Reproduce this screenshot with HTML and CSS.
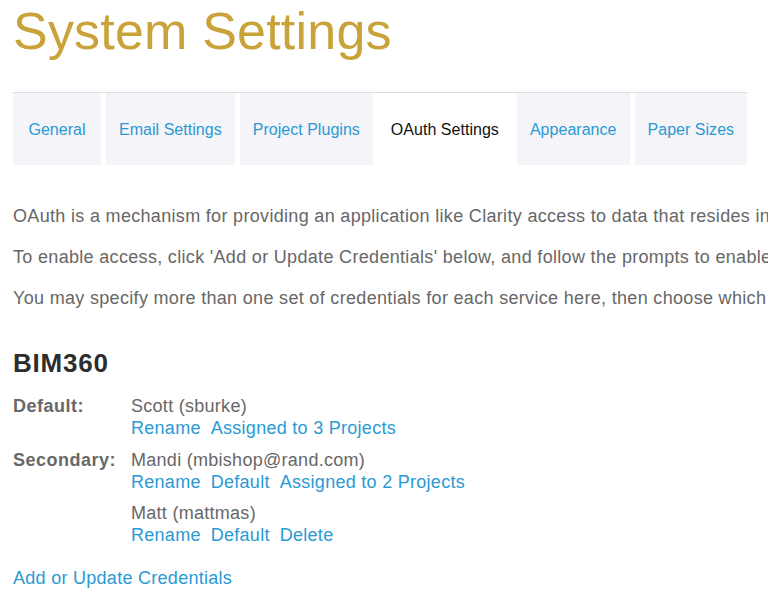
FILE: index.html
```html
<!DOCTYPE html>
<html lang="en">
<head>
<meta charset="utf-8">
<title>System Settings</title>
<link rel="stylesheet" href="styles.css">
</head>
<body>
<div class="page">
  <h1 class="page-title">System Settings</h1>
  <ul class="tabs">
    <li class="tab tab-general"><a href="#">General</a></li>
    <li class="tab"><a href="#">Email Settings</a></li>
    <li class="tab"><a href="#">Project Plugins</a></li>
    <li class="tab active"><a href="#">OAuth Settings</a></li>
    <li class="tab"><a href="#">Appearance</a></li>
    <li class="tab"><a href="#">Paper Sizes</a></li>
  </ul>
  <div class="intro">
    <p>OAuth is a mechanism for providing an application like Clarity access to data that resides in another application, such as BIM360, without sharing your password.</p>
    <p>To enable access, click 'Add or Update Credentials' below, and follow the prompts to enable Clarity to access your account.</p>
    <p>You may specify more than one set of credentials for each service here, then choose which set to use for each project.</p>
  </div>
  <h2 class="service-title">BIM360</h2>
  <dl class="creds">
    <dt class="cred-label">Default:</dt>
    <dd class="cred">
      <div class="cred-name">Scott (sburke)</div>
      <div class="cred-actions"><a href="#">Rename</a><a href="#">Assigned to 3 Projects</a></div>
    </dd>
    <dt class="cred-label">Secondary:</dt>
    <dd class="cred">
      <div class="cred-name">Mandi (mbishop@rand.com)</div>
      <div class="cred-actions"><a href="#">Rename</a><a href="#">Default</a><a href="#">Assigned to 2 Projects</a></div>
    </dd>
    <dt class="cred-label"></dt>
    <dd class="cred">
      <div class="cred-name">Matt (mattmas)</div>
      <div class="cred-actions"><a href="#">Rename</a><a href="#">Default</a><a href="#">Delete</a></div>
    </dd>
  </dl>
  <a class="add-link" href="#">Add or Update Credentials</a>
</div>
</body>
</html>
```

FILE: styles.css
```css
html, body {
  margin: 0;
  padding: 0;
  overflow: hidden;
  background: #ffffff;
}

body {
  font-family: "Liberation Sans", Arial, sans-serif;
  color: #676767;
}

.page {
  padding: 1px 13px 0 13px;
}

.page-title {
  margin: 0 0 31px 0;
  font-size: 52px;
  line-height: 60px;
  font-weight: normal;
  letter-spacing: 0.2px;
  color: #c9a33a;
  white-space: nowrap;
}

.tabs {
  display: inline-flex;
  gap: 5px;
  margin: 0;
  padding: 0;
  list-style: none;
  border-top: 1px solid #dcdce3;
}

.tab {
  background: #f4f4f9;
}

.tab a {
  display: block;
  padding: 27px 13px 25px 13px;
  font-size: 16px;
  line-height: 20px;
  letter-spacing: 0.03px;
  color: #2a9ad4;
  text-decoration: none;
  white-space: nowrap;
}

.tab-general a {
  min-width: 62px;
  text-align: center;
}

.tab.active {
  background: #ffffff;
}

.tab.active a {
  color: #111111;
}

.intro {
  margin-top: 40px;
}

.intro p {
  margin: 0 0 18px 0;
  font-size: 18px;
  line-height: 23px;
  letter-spacing: 0.32px;
  white-space: nowrap;
}

.service-title {
  margin: 38px 0 17px 0;
  font-size: 26px;
  line-height: 30px;
  font-weight: bold;
  letter-spacing: 0.8px;
  color: #2d2d2d;
}

.creds {
  display: grid;
  grid-template-columns: 118px 1fr;
  row-gap: 9px;
  margin: 0;
  font-size: 18px;
  line-height: 22.3px;
  letter-spacing: 0.28px;
}

.cred-label {
  font-weight: bold;
  color: #686868;
  letter-spacing: 0.5px;
}

.cred {
  margin: 0;
}

.cred-actions {
  display: flex;
  gap: 10px;
}

.cred-actions a,
.add-link {
  color: #2a9ad4;
  text-decoration: none;
}

.add-link {
  display: inline-block;
  margin-top: 20px;
  font-size: 18px;
  line-height: 22px;
  letter-spacing: 0.28px;
}
```
